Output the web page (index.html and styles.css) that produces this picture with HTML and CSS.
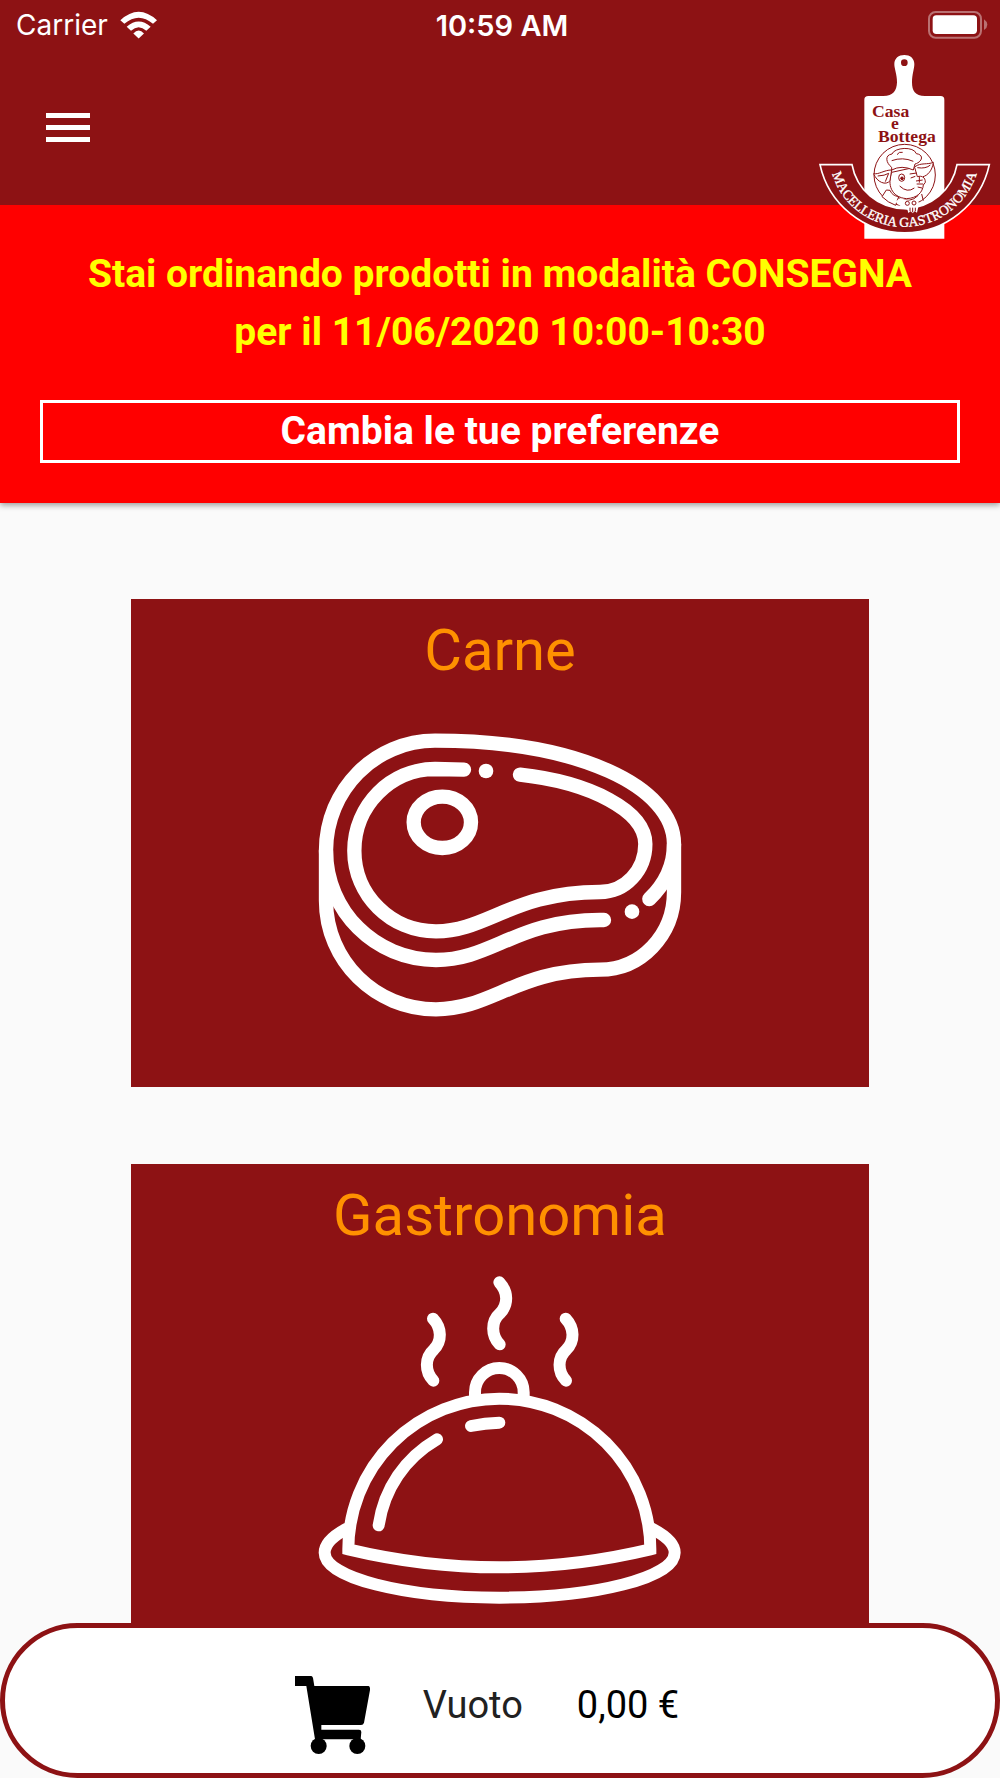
FILE: index.html
```html
<!DOCTYPE html>
<html lang="it">
<head>
  <meta charset="UTF-8" />
  <meta name="viewport" content="width=device-width, initial-scale=1.0"/>
  <title>Casa e Bottega</title>
  <link rel="stylesheet" href="styles.css">
</head>
<body>
  <header class="header">
    <div class="status">
      <div class="carrier">
        <span>Carrier</span>
        <svg class="wifi" viewBox="360 29 111 83">
          <path d="M416 111 L400 96 Q416 78 432 96 Z"/>
          <path d="M380 76 Q416 44 452 76 L439 88 Q416 66 393 88 Z"/>
          <path d="M361 56 Q416 5 471 56 L459 67 Q416 30 373 67 Z"/>
        </svg>
      </div>
      <span class="time">10:59 AM</span>
      <svg class="battery" viewBox="384 31 180 84">
        <rect class="battery-frame" x="387" y="34" width="156" height="77" rx="20"/>
        <rect x="398" y="44" width="133" height="56" rx="11"/>
        <path class="battery-nub" d="M552 56 Q562 63 562 72 T552 88 Z"/>
      </svg>
    </div>
    <div class="toolbar">
      <button class="menu" aria-label="Menu">
        <span></span><span></span><span></span>
      </button>
    </div>
    <svg class="logo" viewBox="54 160 519 558" role="img" aria-label="Casa e Bottega">
      <!-- tagliere -->
      <path fill="#fff" d="M193 714 V297 Q193 286 205 286 H250 C280 286 290 270 291 245 C291 220 283 205 283 190 C283 173 296 163 313 163 S343 173 343 190 C343 205 336 220 336 245 C336 270 345 286 375 286 H422 Q433 286 433 297 V714 Z"/>
      <circle class="dark" cx="313" cy="186" r="10"/>
      <text class="name" x="216" y="348">Casa</text>
      <text class="name" x="273" y="384">e</text>
      <text class="name" x="234" y="423">Bottega</text>
      <!-- maialino -->
      <g class="pig">
        <circle cx="314" cy="523" r="92"/>
        <path class="white" d="M275 515 C262 550 272 590 320 594 C352 592 368 575 370 553 L376 545 C376 530 366 524 352 528 L344 500 Z"/>
        <path class="white" d="M275 500 C258 487 253 463 276 460 C283 440 342 436 349 459 C373 462 367 484 345 490 L340 508 Q305 492 275 508 Z"/>
        <path d="M275 480 Q308 468 340 482 M291 462 Q297 452 308 455"/>
        <path class="white" d="M275 508 C252 508 237 522 221 519 C231 545 258 556 270 540 Z"/>
        <path d="M233 526 Q255 525 266 518 L256 543"/>
        <path class="white" d="M345 498 C363 485 382 493 400 485 C397 510 382 525 369 528"/>
        <path d="M352 501 Q378 505 391 493"/>
        <ellipse cx="305" cy="531" rx="9" ry="11"/>
        <circle class="dark" cx="306" cy="533" r="4"/>
        <path d="M299 556 Q322 578 343 562 M329 520 L350 517 M332 532 L346 527 M348 541 L368 538 M350 550 L369 550 M353 559 L366 562 M358 528 V546"/>
        <path class="white" d="M259 568 L246 588 Q264 606 287 614 L296 588 Q276 585 270 569 Z"/>
        <path d="M294 591 Q330 610 355 584 M365 580 L370 600"/>
      </g>
      <!-- nastro -->
      <path class="ribbon" d="M60 492 H156 A160 160 0 0 0 471 492 H568 A260 260 0 0 1 60 492 Z"/>
      <path class="paws" d="M286 603 L301 592 L319 599 L333 601 L352 596 L358 611 Q351 631 334 625 Q314 631 305 619 Z"/>
      <path class="paws" d="M320 619 L325 637 L332 632 L338 638 L344 632 L351 636 L355 618 Z"/>
      <g class="pig">
        <circle cx="322" cy="608" r="6"/>
        <circle cx="342" cy="607" r="6"/>
        <path d="M330 621 V632 M338 621 V635 M346 621 V632"/>
      </g>
      <path id="arc" fill="none" d="M91 499 A227 227 0 0 0 535 499"/>
      <text class="motto"><textPath href="#arc" startOffset="50%">MACELLERIA GASTRONOMIA</textPath></text>
    </svg>
  </header>

  <section class="notice">
    <p>Stai ordinando prodotti in modalità CONSEGNA<br>per il 11/06/2020 10:00-10:30</p>
    <button class="change">Cambia le tue preferenze</button>
  </section>

  <main class="categories">
    <a class="card" href="#carne">
      <h2>Carne</h2>
      <svg class="icon steak" viewBox="54 307 1092 1092">
        <path d="M78 930 V780 C78 598 224 450 405 450 C840 450 1122 590 1122 760 V905 C1122 1033 1023 1137 900 1137 C650 1137 575 1256 408 1256 C226 1256 78 1110 78 930 Z"/>
        <path d="M78 780 C78 961 226 1108 408 1108 C575 1108 650 988 900 988 H912"/>
        <path d="M1122 760 C1122 825 1093 882 1048 925"/>
        <path d="M492 537 L405 535 C272 535 163 645 163 780 C163 913 272 1022 408 1022 C560 1022 640 904 900 904 C976 904 1036 839 1036 760 C1036 660 870 575 660 552"/>
        <ellipse cx="427" cy="695" rx="86" ry="77"/>
        <circle class="dot" cx="558" cy="541" r="22"/>
        <circle class="dot" cx="996" cy="963" r="22"/>
      </svg>
    </a>
    <a class="card" href="#gastronomia">
      <h2>Gastronomia</h2>
      <svg class="icon dish" viewBox="54 293 1092 1092">
        <path d="M598 366 C625 395 625 433 600 459 C573 483 573 525 599 552"/>
        <path d="M399 475 C426 504 426 542 401 568 C374 592 374 634 400 661"/>
        <path d="M797 475 C824 504 824 542 799 568 C772 592 772 634 798 661"/>
        <path class="butt" d="M525 712 V696 A73 73 0 0 1 671 696 V712"/>
        <path class="butt" d="M145 1167 A453 452 0 0 1 1051 1167 Q824 1221 598 1221 T145 1167 Z"/>
        <path class="butt" d="M142 1104 C98 1127 74 1150 74 1177 C74 1252 310 1312 598 1312 S1124 1252 1124 1177 C1124 1152 1101 1128 1054 1104"/>
        <path d="M236 1095 C252 985 315 893 411 837"/>
        <path d="M513 797 Q555 788 598 787"/>
      </svg>
    </a>
  </main>

  <footer class="cart">
    <svg class="cart-icon" viewBox="44 48 228 234">
      <path d="M44 48 H92 Q98 48 99 60 L102 78 H264 Q270 79 269 90 L251 188 Q249 195 242 195 H123 V209 H236 Q243 209 243 216 L241 238 H104 L78 78 H44 Z"/>
      <circle cx="115" cy="258" r="24"/>
      <circle cx="231" cy="258" r="24"/>
    </svg>
    <span class="cart-state">Vuoto</span>
    <span class="cart-total">0,00 €</span>
  </footer>
</body>
</html>
```
FILE: styles.css
```css
* {
  box-sizing: border-box;
}
body {
  margin: 0;
  font-family: Roboto, Arial, sans-serif;
  background: #fafafa;
}
button {
  font-family: inherit;
  cursor: pointer;
}
.header {
  position: relative;
  background: #8d1214;
  color: white;
}
.status {
  display: grid;
  grid-template-columns: 1fr auto 1fr;
  align-items: center;
  height: 50px;
  padding: 0 12px 0 16px;
  font-family: Inter, sans-serif;
  font-size: 28px;
}
.carrier {
  display: flex;
  align-items: center;
  gap: 12px;
}
.wifi {
  width: 37px;
  height: 28px;
  fill: white;
}
.time {
  font-size: 29px;
  font-weight: 600;
}
.battery {
  width: 60px;
  height: 28px;
  justify-self: end;
  fill: white;
}
.battery-frame {
  fill: none;
  stroke: #ba7172;
  stroke-width: 6;
}
.battery-nub {
  fill: #ba7172;
}
.toolbar {
  display: flex;
  align-items: center;
  height: 155px;
  padding: 0 46px;
}
.menu {
  display: flex;
  flex-direction: column;
  gap: 7px;
  width: 44px;
  padding: 0;
  border: none;
  background: none;
}
.menu span {
  height: 5px;
  background: white;
}

/* il logo sporge sopra l'avviso */
.logo {
  position: absolute;
  top: 54px;
  right: 9px;
  width: 173px;
  height: 186px;
}
.logo .name {
  font: bold 53px "Liberation Serif", serif;
  fill: #8d1214;
}
.logo .motto {
  font: 41px "Liberation Serif", serif;
  fill: white;
  stroke: white;
  stroke-width: 1;
  text-anchor: middle;
}
.logo .dark {
  fill: #8d1214;
}
.logo .ribbon {
  fill: #8d1214;
  stroke: white;
  stroke-width: 5;
}
.logo .paws {
  fill: white;
}
.pig {
  fill: none;
  stroke: #8d1214;
  stroke-width: 3;
}
.pig .white {
  fill: white;
}

.notice {
  padding: 40px;
  background: red;
  text-align: center;
  box-shadow: 0 2px 6px rgba(0,0,0,0.4);
}
.notice p {
  margin: 0 0 39px;
  color: yellow;
  font-size: 39px;
  font-weight: bold;
  line-height: 58px;
}
.change {
  display: block;
  width: 100%;
  height: 63px;
  padding: 0 0 2px;
  border: 3px solid white;
  background: none;
  color: white;
  font-size: 39px;
  font-weight: bold;
}

.categories {
  display: flex;
  flex-direction: column;
  gap: 77px;
  padding: 96px 131px 120px;
}
.card {
  display: flex;
  flex-direction: column;
  align-items: center;
  gap: 10px;
  padding: 18px 0 30px;
  background: #8d1214;
  color: #ff9100;
  text-decoration: none;
}
.card h2 {
  margin: 0;
  font-size: 58px;
  font-weight: normal;
  line-height: 66px;
}
.icon {
  width: 364px;
  height: 364px;
  fill: none;
  stroke: white;
  stroke-linecap: round;
}
.steak {
  stroke-width: 43;
}
.dish {
  stroke-width: 36;
}
.dot {
  fill: white;
  stroke: none;
}
.butt {
  stroke-linecap: butt;
}

.cart {
  position: fixed;
  left: 0;
  right: 0;
  bottom: 0;
  display: flex;
  justify-content: center;
  align-items: center;
  height: 155px;
  padding: 8px 26px 0 0;
  border: 5px solid #8d1214;
  border-radius: 78px;
  background: white;
  font-size: 38px;
}
.cart-icon {
  width: 76px;
  height: 78px;
  margin-top: 20px;
}
.cart-state {
  margin-left: 52px;
  color: #212121;
}
.cart-total {
  margin-left: 54px;
  color: black;
}
```
